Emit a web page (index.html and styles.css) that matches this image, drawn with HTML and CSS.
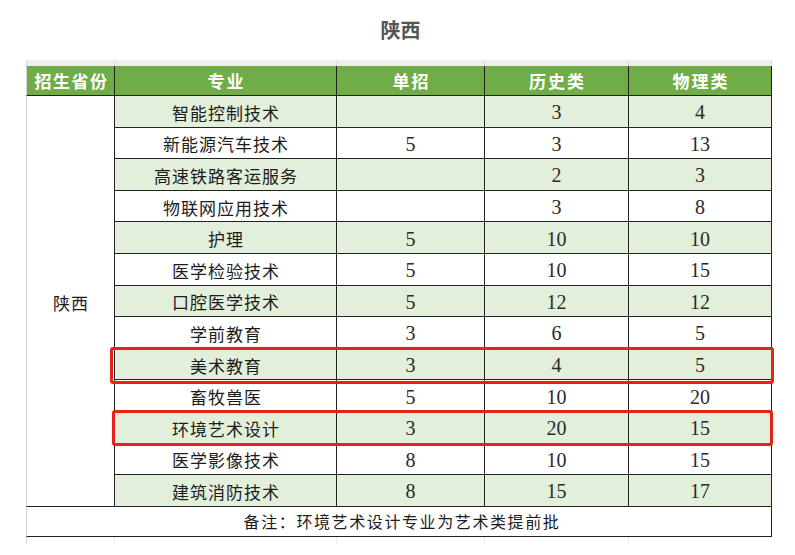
FILE: index.html
```html
<!DOCTYPE html>
<html lang="zh-CN">
<head>
<meta charset="utf-8">
<title>陕西</title>
<link rel="stylesheet" href="styles.css">
</head>
<body>
<div class="page">
  <h1 class="title">陕西</h1>
  <table class="sheet">
    <colgroup>
      <col class="c1"><col class="c2"><col class="c3"><col class="c4"><col class="c5">
    </colgroup>
    <tr class="strip-top"><td></td><td></td><td></td><td></td><td></td></tr>
    <tr class="head">
      <th>招生省份</th><th>专业</th><th>单招</th><th>历史类</th><th>物理类</th>
    </tr>
    <tr class="row alt">
      <td class="prov" rowspan="13">陕西</td>
      <td class="name">智能控制技术</td><td class="num"></td><td class="num">3</td><td class="num">4</td>
    </tr>
    <tr class="row"><td class="name">新能源汽车技术</td><td class="num">5</td><td class="num">3</td><td class="num">13</td></tr>
    <tr class="row alt"><td class="name">高速铁路客运服务</td><td class="num"></td><td class="num">2</td><td class="num">3</td></tr>
    <tr class="row"><td class="name">物联网应用技术</td><td class="num"></td><td class="num">3</td><td class="num">8</td></tr>
    <tr class="row alt"><td class="name">护理</td><td class="num">5</td><td class="num">10</td><td class="num">10</td></tr>
    <tr class="row"><td class="name">医学检验技术</td><td class="num">5</td><td class="num">10</td><td class="num">15</td></tr>
    <tr class="row alt"><td class="name">口腔医学技术</td><td class="num">5</td><td class="num">12</td><td class="num">12</td></tr>
    <tr class="row"><td class="name">学前教育</td><td class="num">3</td><td class="num">6</td><td class="num">5</td></tr>
    <tr class="row alt"><td class="name">美术教育</td><td class="num">3</td><td class="num">4</td><td class="num">5</td></tr>
    <tr class="row"><td class="name">畜牧兽医</td><td class="num">5</td><td class="num">10</td><td class="num">20</td></tr>
    <tr class="row alt"><td class="name">环境艺术设计</td><td class="num">3</td><td class="num">20</td><td class="num">15</td></tr>
    <tr class="row"><td class="name">医学影像技术</td><td class="num">8</td><td class="num">10</td><td class="num">15</td></tr>
    <tr class="row alt"><td class="name">建筑消防技术</td><td class="num">8</td><td class="num">15</td><td class="num">17</td></tr>
    <tr class="foot"><td colspan="5">备注：环境艺术设计专业为艺术类提前批</td></tr>
    <tr class="strip-bottom"><td></td><td></td><td></td><td></td><td></td></tr>
  </table>
  <div class="mark mark-1"></div>
  <div class="mark mark-2"></div>
</div>
</body>
</html>
```
FILE: styles.css
```css
html, body {
  margin: 0;
  padding: 0;
  background: #ffffff;
}

.page {
  position: relative;
  width: 795px;
  height: 555px;
  font-family: "Noto Sans CJK SC", "Noto Sans", sans-serif;
  color: #1c1c1c;
}

.title {
  margin: 0;
  height: 60px;
  display: flex;
  align-items: center;
  justify-content: center;
  padding-left: 6px;
  font-size: 20px;
  font-weight: 700;
  color: #555555;
  box-sizing: border-box;
  padding-bottom: 1px;
}

.sheet {
  margin-left: 26px;
  border-collapse: separate;
  border-spacing: 0;
  table-layout: fixed;
  width: 746px;
}

.c1 { width: 89px; }
.c2 { width: 222px; }
.c3 { width: 148px; }
.c4 { width: 144px; }
.c5 { width: 143px; }

.sheet td, .sheet th {
  padding: 0;
  text-align: center;
  vertical-align: middle;
  border-right: 1px solid #222222;
  border-bottom: 1px solid #222222;
  white-space: nowrap;
  overflow: hidden;
}

.sheet tr > :first-child {
  border-left: 1px solid #d6d6d6;
}

.sheet .row > td.name:first-child {
  border-left: 0;
}

/* spreadsheet strip above header */
.strip-top { height: 6px; }
.strip-top td {
  background: #eeeeee;
  border-right: 1px solid #dddddd;
  border-bottom: 0;
}

/* header */
.head { height: 30px; }
.head th {
  background: #70ad47;
  color: #ffffff;
  font-size: 17px;
  font-weight: 700;
  letter-spacing: 2px;
  text-indent: 2px;
  line-height: 1;
}
.head th:first-child {
  letter-spacing: 1.5px;
}

/* data rows */
.row { height: 31.6px; }
.row.alt td.name, .row.alt td.num {
  background: #e2efda;
}
.name {
  font-size: 17px;
  letter-spacing: 1px;
  text-indent: 1px;
  line-height: 1;
  padding-top: 2px !important;
}
.num {
  font-family: "Liberation Serif", "DejaVu Serif", serif;
  font-size: 20px;
  line-height: 1;
  color: #2a2a2a;
  padding-top: 2px !important;
}
.prov {
  font-size: 17px;
  letter-spacing: 1px;
  text-indent: 1px;
  background: #ffffff;
  padding-top: 4px !important;
}

/* footer note */
.foot { height: 30px; }
.foot td {
  font-size: 16px;
  letter-spacing: 1.6px;
  line-height: 1;
  padding-left: 6px !important;
}

.strip-bottom { height: 7px; }
.strip-bottom td {
  border-right: 1px solid #ebebeb;
  border-bottom: 0;
}
.strip-bottom td:last-child { border-right: 0; }

/* red highlight boxes */
.mark {
  position: absolute;
  border: 3px solid #e8221b;
  border-radius: 3px;
  box-sizing: border-box;
}
.mark-1 {
  left: 110px;
  top: 347px;
  width: 664px;
  height: 37px;
}
.mark-2 {
  left: 112px;
  top: 410px;
  width: 661px;
  height: 36px;
}
```
